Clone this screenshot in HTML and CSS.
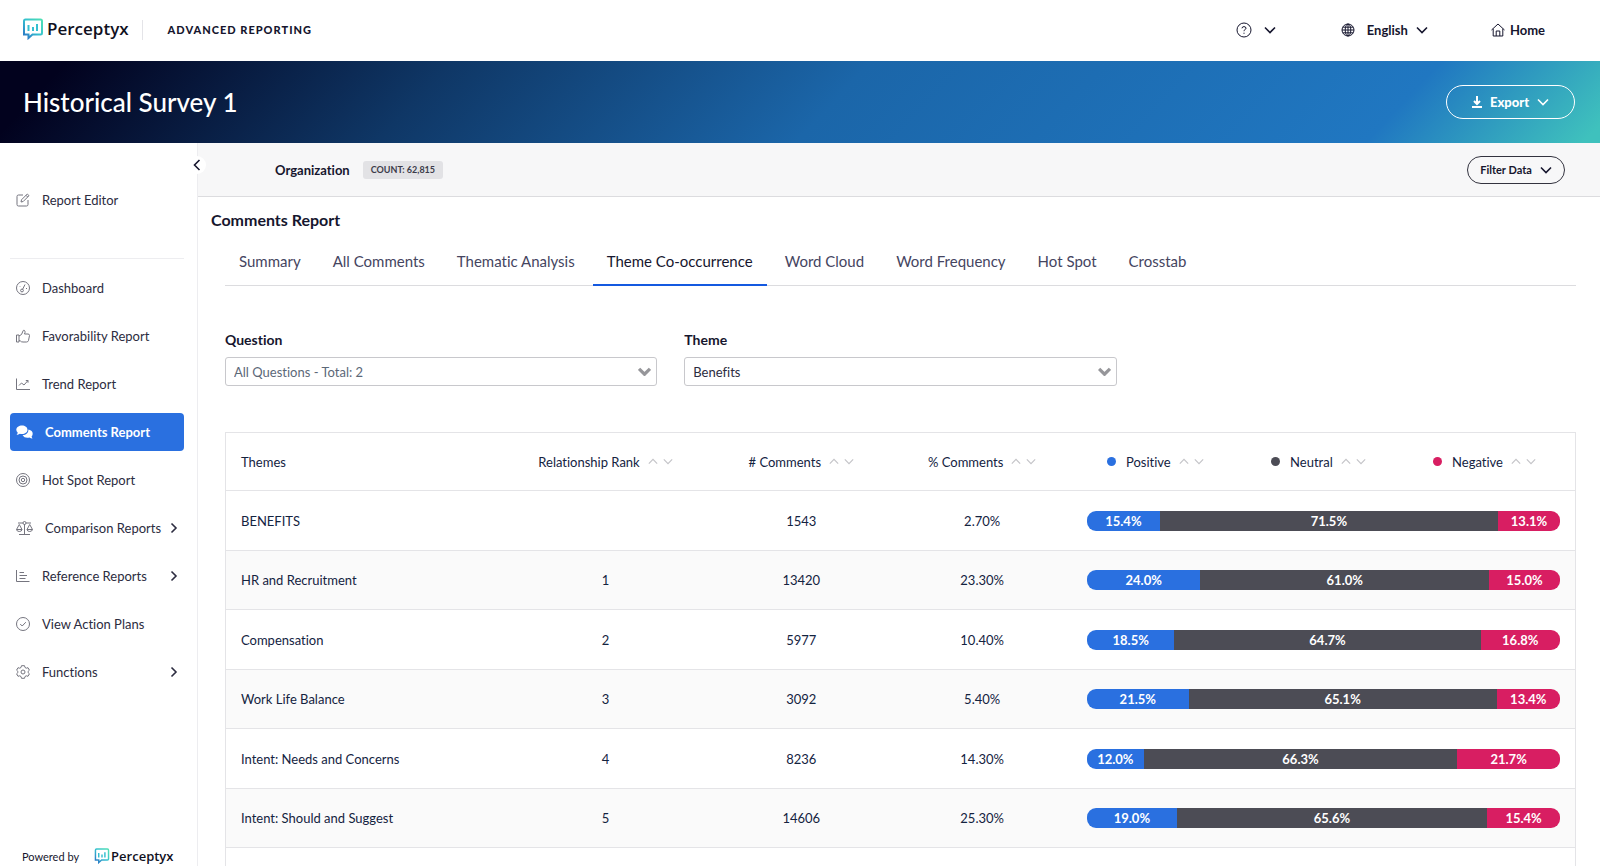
FILE: index.html
```html
<!DOCTYPE html>
<html lang="en">
<head>
  <meta charset="UTF-8">
  <meta name="viewport" content="width=device-width, initial-scale=1.0">
  <title>Comments Report - Historical Survey 1</title>
  <link rel="stylesheet" href="styles.css">
</head>
<body>
  <!-- Shared icons -->
  <svg class="sprite" aria-hidden="true">
    <defs>
      <linearGradient id="logo-gradient" x1="1" y1="0" x2="0" y2="1">
        <stop offset="0" stop-color="#4fe0b4"/>
        <stop offset="0.5" stop-color="#35bfd0"/>
        <stop offset="1" stop-color="#2a6fc4"/>
      </linearGradient>
    </defs>
    <symbol id="logo" viewBox="0 0 21 22">
      <path d="M3 1.5H18Q19.500 1.500 19.500 3V15Q19.500 16.500 18 16.500H10L6 20V16.500H1.500V3Q1.500 1.500 3 1.500Z" fill="none" stroke="url(#logo-gradient)" stroke-width="2"/>
      <path d="M6 7V13M10.500 9V13M14.500 6V13" fill="none" stroke="#35bfd0" stroke-width="2"/>
    </symbol>
    <symbol id="down" viewBox="0 0 12 8"><path d="M1 1.500L6 6.500L11 1.500"/></symbol>
    <symbol id="up" viewBox="0 0 12 8"><path d="M1 6.500L6 1.500L11 6.500"/></symbol>
    <symbol id="right" viewBox="0 0 8 12"><path d="M1.500 1.500L6 6L1.500 10.500"/></symbol>
  </svg>

  <header class="topbar">
    <a class="brand" href="#"><svg class="brand-icon"><use href="#logo"/></svg>Perceptyx</a>
    <span class="product">ADVANCED REPORTING</span>
    <nav class="top-links">
      <button class="top-link help" aria-label="Help">
        <svg class="help-icon" viewBox="0 0 16 16"><circle cx="8" cy="8" r="7"/><path d="M6 6.300Q6.100 4.600 8 4.600T10 6.200Q10 7.200 8.800 7.700Q8 8.100 8 9.200M8 10.700V11.800"/></svg>
        <svg class="chevron"><use href="#down"/></svg>
      </button>
      <button class="top-link language">
        <svg class="icon" viewBox="0 0 14 14"><circle cx="7" cy="7" r="6"/><ellipse cx="7" cy="7" rx="2.800" ry="6"/><path d="M1 7H13M7 1V13M1.800 4.200H12.200M1.800 9.800H12.200"/></svg>
        English
        <svg class="chevron"><use href="#down"/></svg>
      </button>
      <a class="top-link home" href="#">
        <svg class="icon" viewBox="0 0 14 14"><path d="M.5 7L7 1L13.500 7M2.200 5.800V13H11.800V5.800M5.200 13V8H8.800V13"/></svg>
        Home
      </a>
    </nav>
  </header>

  <div class="banner">
    <h1>Historical Survey 1</h1>
    <button class="export">
      <svg class="download" viewBox="0 0 10 12"><path d="M5 0V7.500M2 5L5 8L8 5M0 11H10"/></svg>
      Export
      <svg class="chevron"><use href="#down"/></svg>
    </button>
  </div>

  <div class="layout">
    <aside class="sidebar">
      <button class="collapse" aria-label="Collapse menu"><svg viewBox="0 0 8 12"><path d="M6.500 1L1.500 6L6.500 11"/></svg></button>
      <nav class="menu">
        <a class="menu-item editor" href="#">
          <svg class="icon" viewBox="0 0 14 14"><path d="M7 2H2.500Q1 2 1 3.500V11.500Q1 13 2.500 13H10.500Q12 13 12 11.500V7M5 9L5.500 6.800L11.300 1L13 2.700L7.200 8.500ZM10 2.300L11.700 4"/></svg>
          Report Editor
        </a>
        <a class="menu-item" href="#">
          <svg class="icon" viewBox="0 0 14 14"><circle cx="7" cy="7" r="6.500"/><circle cx="6" cy="9.500" r="1.400"/><path d="M6.600 8.300L9 3.500M4 5.500L4.500 6M10.500 7V8"/></svg>
          Dashboard
        </a>
        <a class="menu-item" href="#">
          <svg class="icon" viewBox="0 0 14 14"><path d="M.5 6H3V13H.5ZM3 7L5.500 5.500L7 2Q7.300 1 8.200 1.300Q9.400 1.800 9 3.500L8.500 5H12Q13.500 5 13.500 6.500L12.500 11.500Q12 13 10.500 13H7Q5 13 4.500 12L3 11.500"/></svg>
          Favorability Report
        </a>
        <a class="menu-item" href="#">
          <svg class="icon" viewBox="0 0 14 14"><path d="M.5 1.500V12.500H14M3 8.500L5.500 6L8 8L12 3.500M9.800 3.500H12V5.700"/></svg>
          Trend Report
        </a>
        <a class="menu-item active" href="#">
          <svg class="icon wide" viewBox="0 0 17 14"><path d="M6 .5C9 .5 11.500 2.300 11.500 4.800S9 9 6 9Q4.800 9 3.800 8.700Q2.500 9.800.6 10Q1.600 8.800 1.700 7.600Q.3 6.500.3 4.800C.3 2.300 3 .5 6 .5ZM12.500 4.500Q16.700 5.500 16.700 8.800Q16.700 10.300 15.600 11.400Q15.800 12.500 16.500 13.500Q14.800 13.300 13.500 12.500Q8.700 13.500 6.500 10.200Q12.300 9.800 12.500 4.500Z"/></svg>
          Comments Report
        </a>
        <a class="menu-item" href="#">
          <svg class="icon" viewBox="0 0 14 14"><circle cx="7" cy="7" r="6.500"/><circle cx="7" cy="7" r="4"/><circle cx="7" cy="7" r="1.700"/></svg>
          Hot Spot Report
        </a>
        <a class="menu-item" href="#">
          <svg class="icon wide" viewBox="0 0 17 14"><path d="M2 2H7M10 2H15M8.500 3V13M3 13.500H14M.5 8.500L3.300 3.500L6 8.500ZM11 8.500L13.700 3.500L16.500 8.500ZM.5 8.500Q.8 10.500 3.300 10.500T6 8.500M11 8.500Q11.300 10.500 13.700 10.500T16.500 8.500"/><circle cx="8.500" cy="2" r="1.500"/></svg>
          Comparison Reports
          <svg class="arrow"><use href="#right"/></svg>
        </a>
        <a class="menu-item" href="#">
          <svg class="icon" viewBox="0 0 14 14"><path d="M.5 1V12.500H13.500M3.500 3.500H8M3.500 6.500H11M3.500 9.500H9.500"/></svg>
          Reference Reports
          <svg class="arrow"><use href="#right"/></svg>
        </a>
        <a class="menu-item" href="#">
          <svg class="icon" viewBox="0 0 14 14"><circle cx="7" cy="7" r="6.500"/><path d="M4.200 7L6.200 9L9.800 5.200"/></svg>
          View Action Plans
        </a>
        <a class="menu-item" href="#">
          <svg class="icon" viewBox="0 0 14 14"><path d="M5.500.7H8.500L9 2.500L10.300 3.200L12 2.700L13.400 5.200L12.100 6.400V7.600L13.400 8.800L12 11.300L10.300 10.800L9 11.500L8.500 13.300H5.500L5 11.500L3.700 10.800L2 11.300L.6 8.800L1.900 7.600V6.400L.6 5.200L2 2.700L3.700 3.200L5 2.500Z"/><circle cx="7" cy="7" r="2"/></svg>
          Functions
          <svg class="arrow"><use href="#right"/></svg>
        </a>
      </nav>
      <div class="powered">Powered by <span class="brand small"><svg class="brand-icon"><use href="#logo"/></svg>Perceptyx</span></div>
    </aside>

    <main class="main">
      <div class="filter-bar">
        <span class="org">Organization</span>
        <span class="count">COUNT: 62,815</span>
        <button class="filter">Filter Data <svg class="chevron"><use href="#down"/></svg></button>
      </div>

      <h2>Comments Report</h2>

      <div class="content">
        <nav class="tabs">
          <a href="#">Summary</a>
          <a href="#">All Comments</a>
          <a href="#">Thematic Analysis</a>
          <a href="#" class="active">Theme Co-occurrence</a>
          <a href="#">Word Cloud</a>
          <a href="#">Word Frequency</a>
          <a href="#">Hot Spot</a>
          <a href="#">Crosstab</a>
        </nav>

        <div class="selectors">
          <div class="field">
            <label for="question">Question</label>
            <div class="select-wrap">
              <select id="question" class="muted"><option>All Questions - Total: 2</option></select>
              <svg class="caret"><use href="#down"/></svg>
            </div>
          </div>
          <div class="field">
            <label for="theme">Theme</label>
            <div class="select-wrap">
              <select id="theme"><option>Benefits</option></select>
              <svg class="caret"><use href="#down"/></svg>
            </div>
          </div>
        </div>

        <table class="themes">
          <thead>
            <tr>
              <th class="col-theme">Themes</th>
              <th class="col-rank"><button class="sort">Relationship Rank <svg><use href="#up"/></svg><svg><use href="#down"/></svg></button></th>
              <th class="col-count"><button class="sort"># Comments <svg><use href="#up"/></svg><svg><use href="#down"/></svg></button></th>
              <th class="col-percent"><button class="sort">% Comments <svg><use href="#up"/></svg><svg><use href="#down"/></svg></button></th>
              <th class="col-sentiment">
                <div class="legend">
                  <button class="sort"><i class="dot positive"></i>Positive <svg><use href="#up"/></svg><svg><use href="#down"/></svg></button>
                  <button class="sort"><i class="dot neutral"></i>Neutral <svg><use href="#up"/></svg><svg><use href="#down"/></svg></button>
                  <button class="sort"><i class="dot negative"></i>Negative <svg><use href="#up"/></svg><svg><use href="#down"/></svg></button>
                </div>
              </th>
            </tr>
          </thead>
          <tbody>
            <tr>
              <td>BENEFITS</td><td></td><td>1543</td><td>2.70%</td>
              <td><div class="bar"><span class="positive" style="width: 15.4%">15.4%</span><span class="neutral" style="width: 71.5%">71.5%</span><span class="negative" style="width: 13.1%">13.1%</span></div></td>
            </tr>
            <tr>
              <td>HR and Recruitment</td><td>1</td><td>13420</td><td>23.30%</td>
              <td><div class="bar"><span class="positive" style="width: 24%">24.0%</span><span class="neutral" style="width: 61%">61.0%</span><span class="negative" style="width: 15%">15.0%</span></div></td>
            </tr>
            <tr>
              <td>Compensation</td><td>2</td><td>5977</td><td>10.40%</td>
              <td><div class="bar"><span class="positive" style="width: 18.5%">18.5%</span><span class="neutral" style="width: 64.7%">64.7%</span><span class="negative" style="width: 16.8%">16.8%</span></div></td>
            </tr>
            <tr>
              <td>Work Life Balance</td><td>3</td><td>3092</td><td>5.40%</td>
              <td><div class="bar"><span class="positive" style="width: 21.5%">21.5%</span><span class="neutral" style="width: 65.1%">65.1%</span><span class="negative" style="width: 13.4%">13.4%</span></div></td>
            </tr>
            <tr>
              <td>Intent: Needs and Concerns</td><td>4</td><td>8236</td><td>14.30%</td>
              <td><div class="bar"><span class="positive" style="width: 12%">12.0%</span><span class="neutral" style="width: 66.3%">66.3%</span><span class="negative" style="width: 21.7%">21.7%</span></div></td>
            </tr>
            <tr>
              <td>Intent: Should and Suggest</td><td>5</td><td>14606</td><td>25.30%</td>
              <td><div class="bar"><span class="positive" style="width: 19%">19.0%</span><span class="neutral" style="width: 65.6%">65.6%</span><span class="negative" style="width: 15.4%">15.4%</span></div></td>
            </tr>
            <tr><td colspan="5"></td></tr>
          </tbody>
        </table>
      </div>
    </main>
  </div>
</body>
</html>
```

FILE: styles.css
```css
* {
  box-sizing: border-box;
}

body {
  display: flex;
  flex-direction: column;
  height: 100vh;
  margin: 0;
  overflow: hidden;
  font-family: Lato, "Liberation Sans", sans-serif;
  font-size: 13px;
  font-variant-ligatures: none;
  color: #16162e;
  background: #fff;
}

a {
  color: inherit;
  text-decoration: none;
}

button {
  padding: 0;
  border: none;
  background: none;
  font: inherit;
  font-variant-ligatures: none;
  color: inherit;
  cursor: pointer;
}

svg {
  flex: none;
  fill: none;
  stroke: currentColor;
}

.sprite {
  position: absolute;
  width: 0;
  height: 0;
}

.chevron {
  width: 12px;
  height: 8px;
  stroke-width: 1.6;
}

.icon {
  width: 14px;
  height: 14px;
}

/* Top bar */
.topbar {
  display: flex;
  align-items: center;
  flex: none;
  height: 61px;
  padding: 0 55px 2px 22px;
}

.brand {
  display: flex;
  align-items: center;
  gap: 3px;
  height: 24px;
  padding-bottom: 2px;
  font-family: "Open Sans", sans-serif;
  font-size: 17px;
  font-weight: 600;
  line-height: 20px;
  color: #10101e;
}

.brand-icon {
  width: 22px;
  height: 22px;
}

.product {
  margin-left: 13px;
  padding-left: 25px;
  border-left: 1px solid #e4e4e8;
  font-size: 11px;
  font-weight: 900;
  line-height: 20px;
  letter-spacing: 1px;
}

.top-links {
  display: flex;
  align-items: center;
  margin-left: auto;
  font-size: 13px;
  font-weight: 700;
}

.top-link {
  display: flex;
  align-items: center;
}

.help {
  gap: 12px;
  margin-right: 65px;
}

.help-icon {
  width: 16px;
  height: 16px;
}

.language {
  gap: 8px;
  margin-right: 63px;
}

.language .icon {
  margin-right: 4px;
}

.home {
  gap: 5px;
}

/* Page banner */
.banner {
  display: flex;
  align-items: center;
  justify-content: space-between;
  flex: none;
  height: 82px;
  padding: 0 25px 0 23px;
  color: #fff;
  background: linear-gradient(133deg, #02021e 4%, #0f3766 27%, #1b66a9 52%, #2077c1 86%, #3fc1bd 99%);
}

.banner h1 {
  margin: 0;
  font-size: 26px;
  font-weight: 500;
}

.export {
  display: flex;
  align-items: center;
  justify-content: center;
  gap: 8px;
  width: 129px;
  height: 34px;
  border: 1px solid #fff;
  border-radius: 17px;
  font-weight: 900;
}

.download {
  width: 10px;
  height: 12px;
  stroke-width: 2;
}

.layout {
  display: flex;
  flex: 1;
  min-height: 0;
}

/* Sidebar */
.sidebar {
  position: relative;
  display: flex;
  flex-direction: column;
  flex: none;
  width: 198px;
  padding: 38px 13px 0 10px;
  border-right: 1px solid #ededf0;
}

.collapse {
  position: absolute;
  top: 13px;
  right: -9px;
  display: flex;
  align-items: center;
  justify-content: center;
  width: 18px;
  height: 18px;
  border-radius: 50%;
  background: #fff;
}

.collapse svg {
  width: 8px;
  height: 12px;
  stroke-width: 1.6;
}

.menu {
  display: flex;
  flex-direction: column;
  gap: 10px;
}

.menu-item {
  display: flex;
  align-items: center;
  height: 38px;
  padding: 0 6px;
  border-radius: 4px;
  line-height: 16px;
  white-space: nowrap;
  color: #2c2c40;
}

.menu-item .icon {
  margin-right: 12px;
  color: #75757f;
}

.menu-item .wide {
  width: 17px;
}

.menu-item.editor {
  height: 78px;
  padding-bottom: 40px;
  border-bottom: 1px solid #ededf0;
  border-radius: 0;
}

.menu-item.active {
  font-weight: 700;
  color: #fff;
  background: #2a70e0;
}

.menu-item.active .icon {
  fill: #fff;
  stroke: none;
}

.arrow {
  width: 8px;
  height: 12px;
  margin-left: auto;
  stroke-width: 1.6;
}

.powered {
  display: flex;
  align-items: center;
  gap: 15px;
  height: 20px;
  margin-top: auto;
  padding-left: 12px;
  font-size: 11px;
}

.brand.small {
  gap: 1px;
  padding-bottom: 0;
  font-size: 13px;
}

.small .brand-icon {
  width: 16px;
  height: 16px;
}

/* Main area */
.main {
  flex: 1;
  min-width: 0;
  overflow: hidden;
}

.filter-bar {
  display: flex;
  align-items: center;
  height: 54px;
  padding: 0 35px 0 77px;
  border-bottom: 1px solid #dcdcdf;
  background: #f7f7f8;
}

.org {
  font-weight: 700;
}

.count {
  margin-left: 13px;
  padding: 0 8px;
  border-radius: 3px;
  background: #e2e2e5;
  font-size: 9px;
  font-weight: 700;
  line-height: 18px;
  color: #3c3c4a;
}

.filter {
  display: flex;
  align-items: center;
  justify-content: center;
  gap: 8px;
  width: 98px;
  height: 28px;
  margin-left: auto;
  border: 1px solid #33333f;
  border-radius: 14px;
  font-size: 11px;
  font-weight: 700;
}

.main h2 {
  margin: 13px 0 0 13px;
  font-size: 16px;
  font-weight: 700;
  line-height: 20px;
}

.content {
  padding: 8px 24px 0 27px;
}

.tabs {
  display: flex;
  gap: 4px;
  border-bottom: 1px solid #dcdcdf;
}

.tabs a {
  height: 48px;
  margin-bottom: -1px;
  padding: 0 14px;
  font-size: 15px;
  line-height: 46px;
  color: #45455f;
}

.tabs .active {
  border-bottom: 2px solid #1459e0;
  color: #16162e;
}

.selectors {
  display: grid;
  grid-template-columns: 32% 32%;
  gap: 27px;
  margin-top: 44px;
}

.field label {
  display: block;
  font-size: 14px;
  font-weight: 700;
  line-height: 20px;
}

.select-wrap {
  position: relative;
  margin-top: 7px;
}

.select-wrap select {
  width: 100%;
  height: 29px;
  padding: 0 8px;
  border: 1px solid #c8c8cc;
  border-radius: 3px;
  appearance: none;
  background: #fff;
  font: inherit;
  font-variant-ligatures: none;
  color: #2c2c40;
}

.select-wrap .muted {
  color: #5c6878;
}

.caret {
  position: absolute;
  top: 10px;
  right: 6px;
  width: 13px;
  height: 9px;
  stroke-width: 3;
  color: #96969a;
  pointer-events: none;
}

/* Themes table */
.themes {
  width: 100%;
  margin-top: 46px;
  border: 1px solid #e4e4e7;
  border-collapse: collapse;
  table-layout: fixed;
  color: #14233f;
}

.themes tr {
  height: 59px;
  border-bottom: 1px solid #e4e4e7;
}

.themes thead tr {
  height: 58px;
}

.themes tbody tr:nth-child(odd) {
  height: 60px;
}

.themes tbody tr:nth-child(even) {
  background: #fafafa;
}

.themes th,
.themes td {
  padding: 0 15px;
  font-weight: 400;
  text-align: center;
}

.themes th:first-child,
.themes td:first-child {
  text-align: left;
}

.col-theme { width: 20.4%; }
.col-rank { width: 15.5%; }
.col-count { width: 13.5%; }
.col-percent { width: 13.3%; }

.sort {
  display: inline-flex;
  align-items: center;
  gap: 5px;
  white-space: nowrap;
}

.sort svg {
  width: 10px;
  height: 7px;
  stroke-width: 1.4;
  color: #c4c4c8;
}

.sort svg:first-of-type {
  margin-left: 3px;
}

.legend {
  display: flex;
  justify-content: space-between;
  padding: 0 24px 0 20px;
}

.dot {
  width: 9px;
  height: 9px;
  margin-right: 5px;
  border-radius: 50%;
}

.positive { background: #2a70e0; }
.neutral { background: #4c4c55; }
.negative { background: #d81e62; }

.bar {
  display: flex;
  height: 20px;
  overflow: hidden;
  border-radius: 9px;
  color: #fff;
  font-weight: 700;
  line-height: 21px;
}
```
